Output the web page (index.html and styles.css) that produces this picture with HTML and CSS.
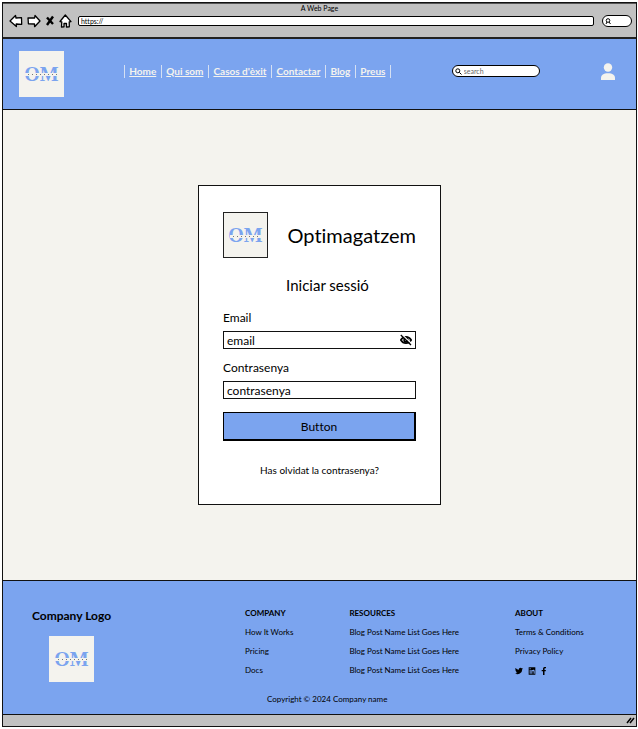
FILE: index.html
```html
<!DOCTYPE html>
<html lang="ca">
<head>
<meta charset="utf-8">
<meta name="viewport" content="width=device-width, initial-scale=1">
<title>A Web Page</title>
<link rel="stylesheet" href="styles.css">
</head>
<body>
<div class="window">
  <div class="chrome">
    <div class="chrome-title">A Web Page</div>
    <div class="chrome-bar">
      <div class="chrome-buttons">
        <button class="icon-button" type="button" aria-label="Back"><svg width="14" height="14" viewBox="0 0 14 14"><path d="M1 7 6.500 1.500 7 4l5.500-.3.2 6.600L7.200 10l.2 2.500z"/></svg></button>
        <button class="icon-button" type="button" aria-label="Forward"><svg width="14" height="14" viewBox="0 0 14 14"><path d="M13 7 8 1.500 7.600 4 1 3.800l.4 6L7.500 10l.1 2.700z"/></svg></button>
        <button class="icon-button" type="button" aria-label="Stop"><svg class="stop" width="10" height="12" viewBox="0 0 10 12"><path d="M2 2.500 8 9M8 1.500 2 10"/></svg></button>
        <button class="icon-button" type="button" aria-label="Home"><svg width="13" height="14" viewBox="0 0 13 14"><path d="M6.300 1 1 7.500l1.800.3L2.500 13l2.500-.2V9.500h2.500V13l2.800-.2-.1-5L12 7.600z"/></svg></button>
      </div>
      <input class="address" type="text" value="https://" aria-label="Address">
      <label class="chrome-search">
        <svg width="6" height="7" viewBox="0 0 6 7"><circle cx="3" cy="2.500" r="1.800"/><path d="M4 4 5.500 6M2 4 1 6"/></svg>
        <input type="text" aria-label="Browser search">
      </label>
    </div>
  </div>

  <header class="header">
    <div class="logo">OM</div>
    <nav class="nav">
      <a href="#">Home</a><a href="#">Qui som</a><a href="#">Casos d'èxit</a><a href="#">Contactar</a><a href="#">Blog</a><a href="#">Preus</a>
    </nav>
    <label class="search">
      <svg width="7" height="7" viewBox="0 0 7 7"><circle cx="2.800" cy="2.800" r="2"/><path d="M4.300 4.300 6.500 6.500"/></svg>
      <input type="text" placeholder="search" aria-label="search">
    </label>
    <svg class="user" width="16" height="18" viewBox="0 0 16 18"><circle cx="8" cy="4.500" r="4.200"/><path d="M1 17v-2c0-3 2.500-4.800 7-4.800s7 1.800 7 4.800v2z"/></svg>
  </header>

  <main class="main">
    <form class="card">
      <div class="brand">
        <div class="logo logo-outlined">OM</div>
        <h1>Optimagatzem</h1>
      </div>
      <h2>Iniciar sessió</h2>
      <label class="label" for="email">Email</label>
      <div class="field">
        <input id="email" type="text" placeholder="email">
        <svg width="12" height="12" viewBox="0 0 12 12"><path class="eye" d="M.8 6C3.200 1.800 8.800 1.800 11.200 6 8.800 10.200 3.200 10.200.8 6z"/><circle class="eye" cx="6" cy="6" r="1.900"/><path class="gap" d="M1.800.5 11.500 9.500"/><path class="slash" d="M.8 1 11 11"/></svg>
      </div>
      <label class="label" for="password">Contrasenya</label>
      <div class="field">
        <input id="password" type="text" placeholder="contrasenya">
      </div>
      <button class="submit" type="button">Button</button>
      <a class="forgot" href="#">Has olvidat la contrasenya?</a>
    </form>
  </main>

  <footer class="footer">
    <div class="footer-brand">
      <h3>Company Logo</h3>
      <div class="logo">OM</div>
    </div>
    <div class="footer-info">
      <div class="columns">
        <section>
          <h4>COMPANY</h4>
          <a href="#">How It Works</a>
          <a href="#">Pricing</a>
          <a href="#">Docs</a>
        </section>
        <section>
          <h4>RESOURCES</h4>
          <a href="#">Blog Post Name List Goes Here</a>
          <a href="#">Blog Post Name List Goes Here</a>
          <a href="#">Blog Post Name List Goes Here</a>
        </section>
        <section>
          <h4>ABOUT</h4>
          <a href="#">Terms &amp; Conditions</a>
          <a href="#">Privacy Policy</a>
          <div class="social">
            <a href="#" aria-label="Twitter"><svg width="8" height="8" viewBox="0 0 24 24"><path d="M24 4.600a10 10 0 0 1-2.800.8 5 5 0 0 0 2.100-2.700 10 10 0 0 1-3.100 1.200 4.900 4.900 0 0 0-8.400 4.500A14 14 0 0 1 1.700 3.100a4.900 4.900 0 0 0 1.500 6.600 5 5 0 0 1-2.200-.6 4.900 4.900 0 0 0 3.900 4.900 5 5 0 0 1-2.200.1 4.900 4.900 0 0 0 4.600 3.400A10 10 0 0 1 0 19.500 14 14 0 0 0 21.500 7a10 10 0 0 0 2.500-2.400z"/></svg></a>
            <a href="#" aria-label="LinkedIn"><svg width="8" height="8" viewBox="0 0 24 24"><path fill-rule="evenodd" d="M2 1h20v22H2zM5 9v11h3V9zM5 4v3h3V4zM10 9v11h3v-6c0-3 4-3 4 0v6h3v-7c0-5-5-5.500-7-3V9z"/></svg></a>
            <a href="#" aria-label="Facebook"><svg width="6" height="8" viewBox="0 0 16 24"><path d="M5 24V13H1V9h4V6c0-4 2.500-6 6-6 1.500 0 3 .2 3 .2V4h-2c-2 0-2.500 1-2.500 2.300V9h4.300l-.8 4H9.500v11z"/></svg></a>
          </div>
        </section>
      </div>
      <p class="copyright">Copyright © 2024 Company name</p>
    </div>
  </footer>
  <div class="statusbar"><svg width="9" height="7" viewBox="0 0 9 7"><path d="M1 6 5 1M4 6 8 1"/></svg></div>
</div>
</body>
</html>
```
FILE: styles.css
```css
* {
  box-sizing: border-box;
}

body {
  margin: 0;
  padding: 2px 1px 2px 2px;
  background: #fff;
  color: #000;
  font-family: Lato, "Open Sans", sans-serif;
  font-variant-ligatures: none;
}

h1, h2, h3, h4, p {
  margin: 0;
}

a {
  color: inherit;
  text-decoration: none;
}

button, input {
  font-family: inherit;
  font-variant-ligatures: none;
  color: inherit;
}

input {
  border: 0;
  padding: 0;
  background: none;
  outline: 0;
  min-width: 0;
}

.window {
  display: flex;
  flex-direction: column;
  min-height: calc(100vh - 4px);
  border: 1px solid #111;
}

/* Browser chrome */
.chrome {
  height: 36px;
  border-top: 1px solid #555;
  border-bottom: 2px solid #222;
  background: #c1c1c1;
}

.chrome-title {
  height: 8px;
  font-size: 7px;
  line-height: 8px;
  text-align: center;
}

.chrome-bar {
  display: flex;
  align-items: center;
  gap: 6px;
  height: 14px;
  margin-top: 2px;
  padding: 0 4px 0 6px;
}

.chrome-buttons {
  display: flex;
  align-items: center;
  gap: 4px;
}

.icon-button {
  display: flex;
  padding: 0;
  border: 0;
  background: none;
}

.icon-button svg {
  fill: #fff;
  stroke: #000;
  stroke-width: 1.3;
  stroke-linejoin: round;
}

.icon-button .stop {
  stroke-width: 2.4;
}

.address {
  flex: 1;
  height: 10px;
  padding-left: 2px;
  border: 1px solid #000;
  border-radius: 2px;
  background: #fff;
  font-size: 7px;
}

.chrome-search {
  display: flex;
  align-items: center;
  width: 30px;
  height: 12px;
  margin-left: 2px;
  padding-left: 2px;
  border: 1px solid #000;
  border-radius: 8px;
  background: #fff;
}

.chrome-search input {
  width: 100%;
}

.chrome-search svg, .search svg {
  flex: none;
  fill: none;
  stroke: #000;
}

/* Site header */
.header {
  display: flex;
  align-items: center;
  justify-content: space-between;
  height: 71px;
  padding: 0 20px 0 16px;
  border-bottom: 1px solid #111;
  background: #7ba4ef;
}

.logo {
  position: relative;
  display: flex;
  align-items: center;
  justify-content: center;
  width: 45px;
  height: 46px;
  background: #f4f3ee;
  color: #7ba4ef;
  font-family: "Liberation Serif", serif;
  font-size: 20px;
  font-weight: bold;
}

.logo::after {
  content: "";
  position: absolute;
  left: 6px;
  right: 6px;
  top: 22px;
  height: 3px;
  background:
    repeating-linear-gradient(90deg, #f4f3ee 0 3px, #777 3px 4px) 0 1px / 100% 1px no-repeat,
    #f4f3ee;
}

.logo-outlined {
  border: 1px solid #222;
}

.nav {
  display: flex;
  margin-bottom: 6px;
  color: #f4f3ee;
  font-size: 10px;
  font-weight: bold;
  line-height: 13px;
  border-left: 1px solid #d5e0f3;
}

.nav a {
  padding: 0 5px 0 4px;
  border-right: 1px solid #d5e0f3;
  text-decoration: underline;
}

.search {
  display: flex;
  align-items: center;
  gap: 2px;
  width: 88px;
  height: 12px;
  margin-bottom: 6px;
  padding-left: 2px;
  border: 1px solid #000;
  border-radius: 6px;
  background: #fff;
}

.search input {
  width: 100%;
  font-size: 7px;
}

.search input::placeholder {
  color: #666;
}

.user {
  margin-bottom: 4px;
  fill: #f4f3ee;
}

/* Login card */
.main {
  flex: 1;
  display: flex;
  align-items: center;
  justify-content: center;
  padding: 24px;
  background: #f4f3ee;
}

.card {
  display: flex;
  flex-direction: column;
  width: 243px;
  padding: 26px 24px 27px;
  border: 1px solid #111;
  background: #fff;
}

.brand {
  display: flex;
  align-items: center;
  justify-content: space-between;
}

h1 {
  font-size: 20px;
  font-weight: normal;
  line-height: 24px;
}

h2 {
  margin-top: 17px;
  padding-left: 16px;
  font-size: 15px;
  font-weight: normal;
  line-height: 20px;
  text-align: center;
}

.label {
  margin-top: 15px;
  font-size: 12px;
  line-height: 16px;
}

.field {
  display: flex;
  align-items: center;
  height: 18px;
  margin-top: 5px;
  padding: 0 3px;
  border: 1px solid #111;
}

.field + .label {
  margin-top: 11px;
}

.field input {
  flex: 1;
  font-size: 12px;
}

.field input::placeholder {
  color: #000;
  opacity: 1;
}

.eye {
  fill: none;
  stroke: #000;
  stroke-width: 1.6;
}

.gap {
  stroke: #fff;
  stroke-width: 1.2;
}

.slash {
  stroke: #000;
  stroke-width: 1.3;
}

.submit {
  height: 29px;
  margin-top: 13px;
  padding: 0;
  border: solid #000;
  border-width: 1px 2px 2px 1px;
  background: #7ba4ef;
  font-size: 12px;
}

.forgot {
  margin-top: 22px;
  font-size: 10px;
  line-height: 14px;
  text-align: center;
}

/* Footer */
.footer {
  display: flex;
  height: 135px;
  padding: 27px 20px 0 28px;
  border: solid #111;
  border-width: 1px 0;
  background: #7ba4ef;
}

.footer-brand {
  display: flex;
  flex-direction: column;
  align-items: center;
  gap: 12px;
  flex: none;
  width: 81px;
}

h3 {
  font-size: 12px;
  line-height: 16px;
  white-space: nowrap;
}

.footer-info {
  flex: 1;
  margin-left: 133px;
}

.columns {
  display: flex;
  gap: 56px;
  font-size: 8px;
  line-height: 11px;
  white-space: nowrap;
}

.columns section {
  display: flex;
  flex-direction: column;
  gap: 8px;
}

h4 {
  font-size: 8px;
}

.social {
  display: flex;
  align-items: center;
  gap: 5px;
  height: 11px;
}

.social a {
  display: flex;
}

.copyright {
  margin-top: 18px;
  padding-left: 22px;
  font-size: 8px;
  line-height: 11px;
}

.statusbar {
  display: flex;
  align-items: center;
  justify-content: flex-end;
  height: 11px;
  padding-right: 1px;
  background: #c1c1c1;
}

.statusbar svg {
  stroke: #000;
  stroke-width: 1.5;
}
```
